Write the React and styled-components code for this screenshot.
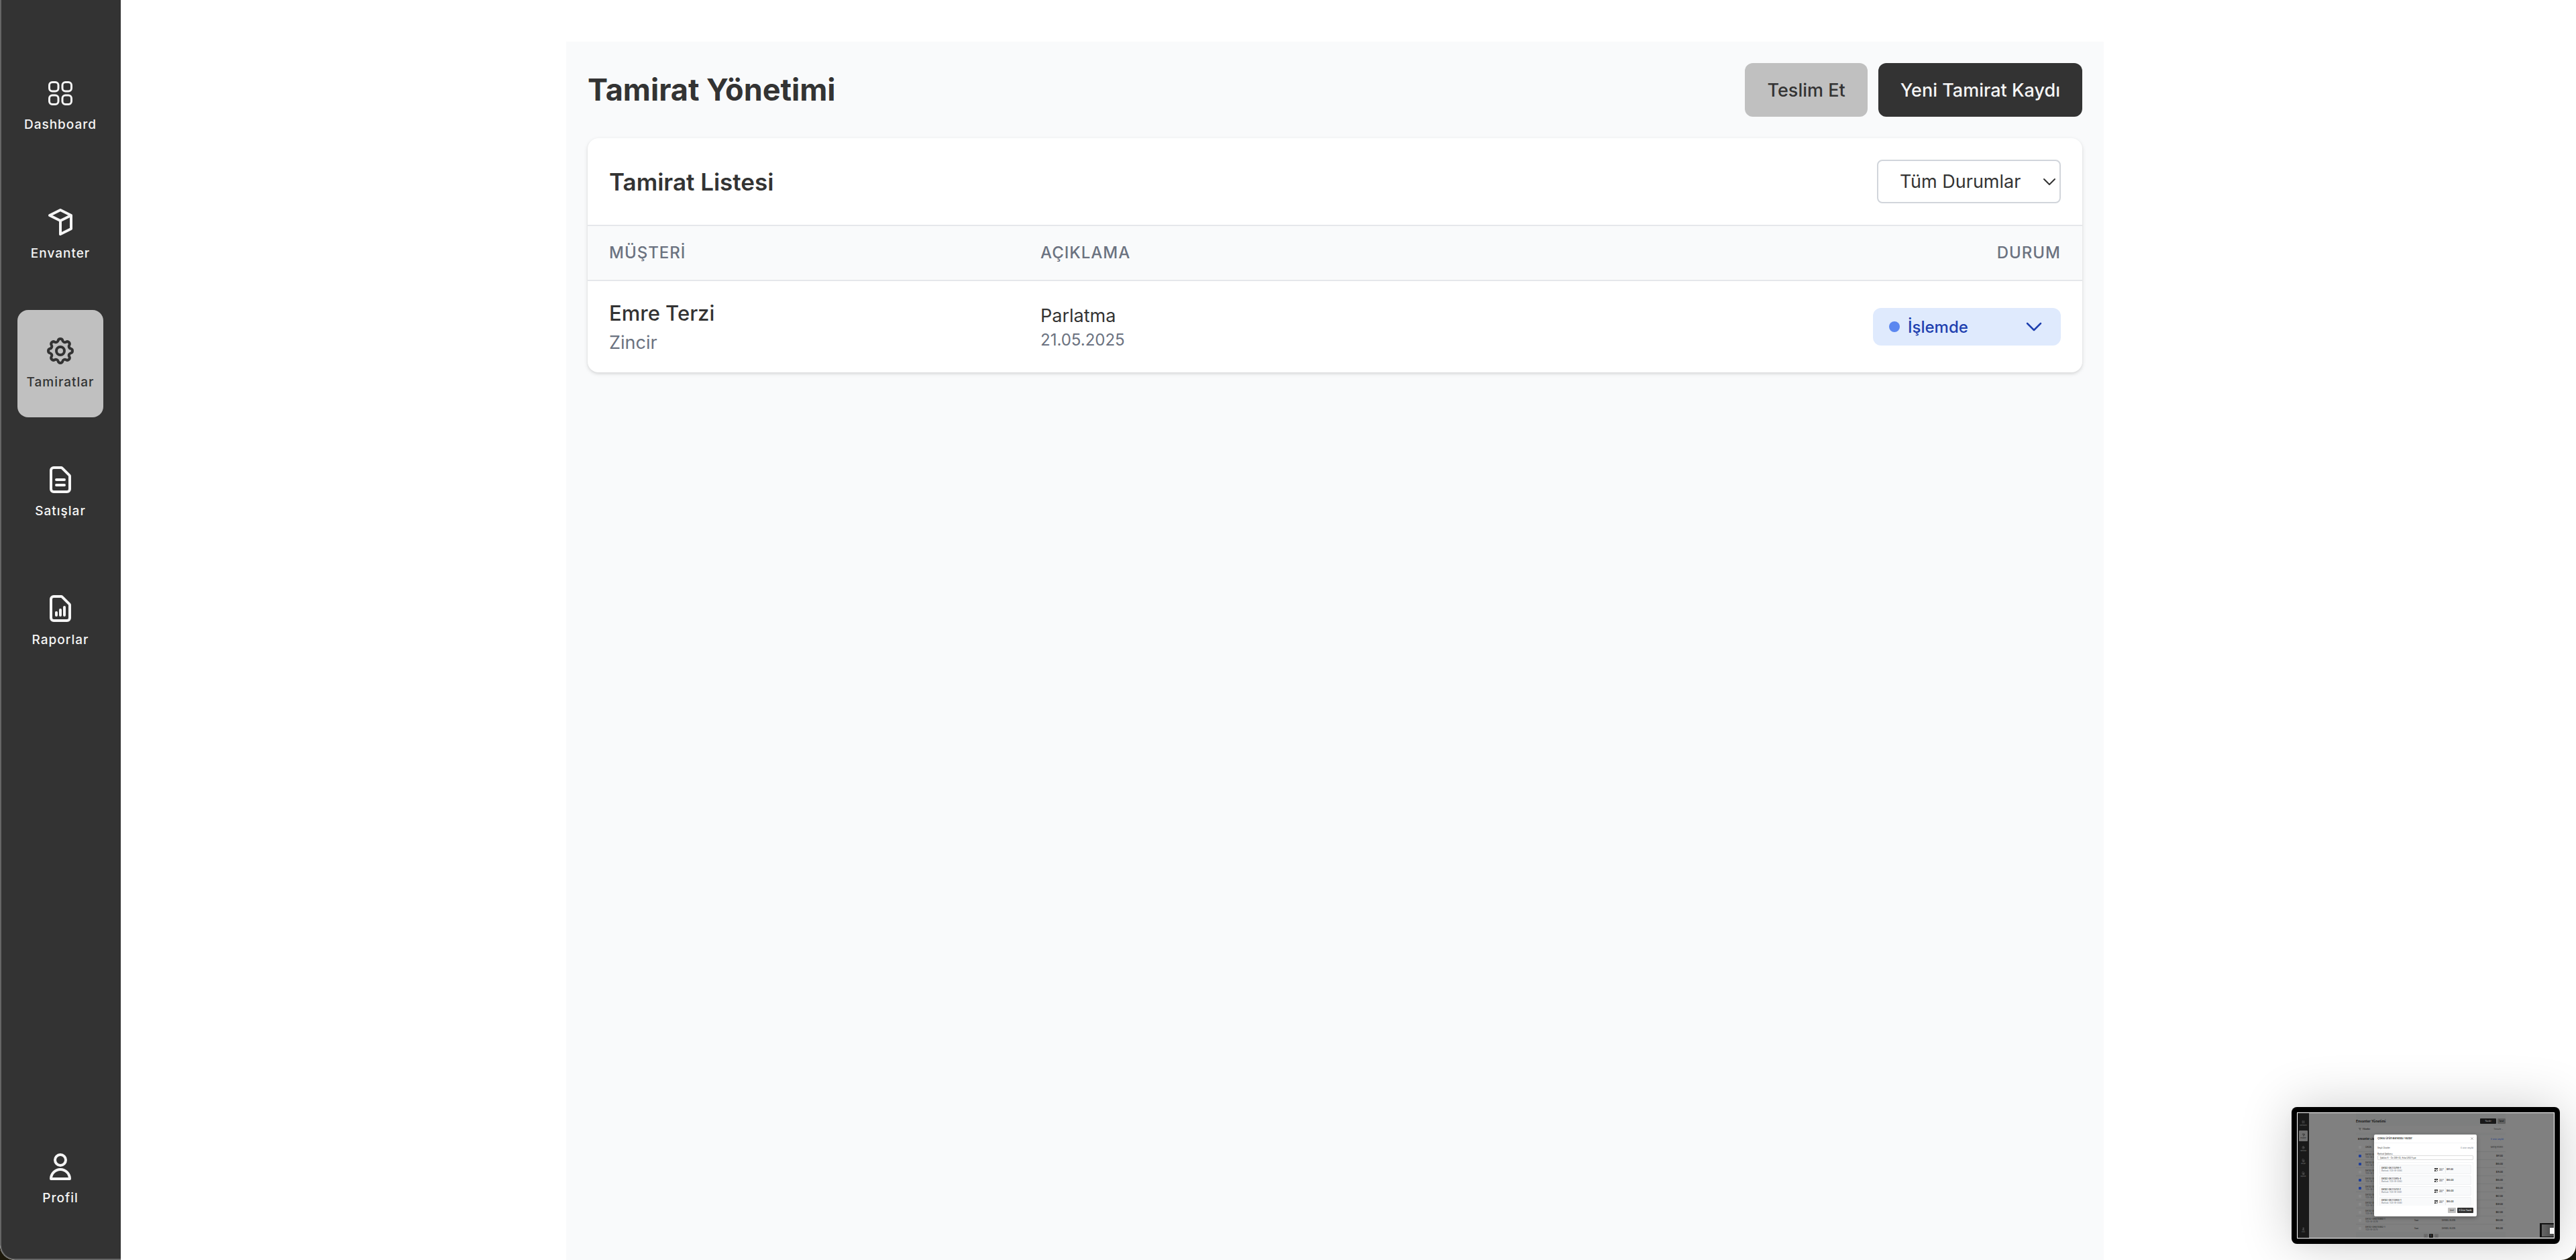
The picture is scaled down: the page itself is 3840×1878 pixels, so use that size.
import React from "react";
import styled, { createGlobalStyle } from "styled-components";

const Global = createGlobalStyle`
  *, *::before, *::after { box-sizing: border-box; }
  body { margin: 0; background: #1d190b; color: #333333; font-family: Inter, "Noto Sans", sans-serif; }
  h1, h2, p { margin: 0; }
  button, select, input { font: inherit; color: inherit; margin: 0; }
`;

const Shell = styled.div`
  display: flex;
  min-height: 100vh;
  background: #ffffff;
  border-radius: 0 0 22px 22px;
  overflow: hidden;
`;

const Sidebar = styled.nav`
  display: flex;
  flex-direction: column;
  align-items: center;
  gap: 32px;
  flex: none;
  width: 180px;
  padding: 78px 2px 38px 0;
  background: #333333;
  border-left: 2px solid #666666;
  border-bottom: 2px solid #666666;
  border-bottom-left-radius: 22px;
`;

const NavLink = styled.a`
  display: flex;
  flex-direction: column;
  align-items: center;
  justify-content: center;
  gap: 8px;
  width: 128px;
  height: 160px;
  margin-top: ${(p) => (p.$last ? "auto" : "0")};
  border-radius: 16px;
  background: ${(p) => (p.$active ? "#c0c0c0" : "transparent")};
  color: ${(p) => (p.$active ? "#333333" : "#f5f5f5")};
  font-size: 19px;
  font-weight: 500;
  line-height: 30px;
  letter-spacing: 1px;
  text-decoration: none;
  svg { width: 48px; height: 48px; }
`;

const Main = styled.main`
  display: flex;
  justify-content: center;
  flex: 1;
  min-width: 0;
  padding: 62px 40px 0 0;
`;

const Panel = styled.section`
  width: 100%;
  max-width: 2292px;
  padding: 32px;
  background: #f9fafb;
`;

const PageHeader = styled.header`
  display: flex;
  align-items: center;
  justify-content: space-between;
  margin-bottom: 32px;
`;

const Title = styled.h1`
  font-size: 45px;
  font-weight: 700;
  line-height: 64px;
`;

const Actions = styled.div`
  display: flex;
  gap: 16px;
`;

const Button = styled.button`
  height: 80px;
  padding: 0 33px;
  border: 0;
  border-radius: 12px;
  background: ${(p) => (p.$primary ? "#333333" : "#c0c0c0")};
  color: ${(p) => (p.$primary ? "#f5f5f5" : "#333333")};
  font-size: 27px;
  font-weight: 500;
`;

const Card = styled.section`
  border-radius: 16px;
  background: #ffffff;
  box-shadow: 0 2px 6px rgba(0, 0, 0, 0.1), 0 2px 4px rgba(0, 0, 0, 0.06);
  overflow: hidden;
`;

const CardHeader = styled.div`
  display: flex;
  align-items: center;
  justify-content: space-between;
  padding: 32px;
  border-bottom: 2px solid #e5e7eb;
`;

const CardTitle = styled.h2`
  font-size: 35px;
  font-weight: 600;
  line-height: 56px;
`;

const SelectWrap = styled.label`
  display: grid;
  align-items: center;
  width: 274px;
  > * { grid-area: 1 / 1; }
  svg { justify-self: end; width: 18px; height: 12px; margin-right: 8px; pointer-events: none; }
`;

const Select = styled.select`
  appearance: none;
  width: 100%;
  height: 65px;
  padding: 0 32px;
  border: 2px solid #d1d5db;
  border-radius: 8px;
  background: #ffffff;
  font-size: 27px;
`;

const Table = styled.table`
  width: 100%;
  border-collapse: separate;
  border-spacing: 0;
  table-layout: fixed;
`;

const Th = styled.th`
  width: ${(p) => p.$width || "auto"};
  height: 82px;
  padding: 0 32px;
  border-bottom: 2px solid #e5e7eb;
  background: #f9fafb;
  color: #6b7280;
  font-size: 24px;
  font-weight: 500;
  line-height: 32px;
  letter-spacing: 1px;
  text-align: ${(p) => p.$align || "left"};
`;

const Td = styled.td`
  padding: 24px 32px;
  text-align: ${(p) => p.$align || "left"};
  vertical-align: middle;
`;

const Customer = styled.p`
  font-size: 31px;
  font-weight: 500;
  line-height: 48px;
`;

const Product = styled.p`
  color: #6b7280;
  font-size: 27px;
  line-height: 40px;
`;

const Note = styled.p`
  font-size: 27px;
  line-height: 40px;
`;

const DateText = styled.p`
  color: #6b7280;
  font-size: 24px;
  line-height: 32px;
`;

const StatusButton = styled.button`
  display: inline-flex;
  align-items: center;
  gap: 12px;
  width: 280px;
  height: 56px;
  padding: 0 24px;
  border: 0;
  border-radius: 12px;
  background: #dfeafd;
  color: #1e40af;
  font-size: 24px;
  font-weight: 500;
  vertical-align: middle;
  svg { width: 32px; height: 32px; margin-left: auto; }
`;

const Dot = styled.span`
  width: 16px;
  height: 16px;
  border-radius: 50%;
  background: #5b87f0;
`;

/* Floating preview of another window */

const Preview = styled.aside`
  position: fixed;
  right: 24px;
  bottom: 24px;
  width: 400px;
  height: 204px;
  padding: 8px;
  border-radius: 8px;
  background: #000000;
  box-shadow: 0 0 80px rgba(0, 0, 0, 0.2), 0 4px 24px rgba(0, 0, 0, 0.04);
`;

const Screen = styled.div`
  position: relative;
  display: flex;
  height: 100%;
  border: 1px solid #ffffff;
  background: #808080;
  color: #1a1a1a;
  font-size: 3px;
  line-height: 4px;
  overflow: hidden;
`;

const MiniSidebar = styled.div`
  display: flex;
  flex-direction: column;
  align-items: center;
  gap: 3px;
  width: 17px;
  padding: 7px 0 4px;
  background: #191919;
`;

const MiniNav = styled.span`
  display: flex;
  flex-direction: column;
  align-items: center;
  justify-content: center;
  width: 13px;
  height: 16px;
  margin-top: ${(p) => (p.$last ? "auto" : "0")};
  border-radius: 1px;
  background: ${(p) => (p.$active ? "#707070" : "transparent")};
  color: ${(p) => (p.$active ? "#191919" : "#7a7a7a")};
  font-size: 2px;
  line-height: 4px;
  svg { width: 5px; height: 5px; }
`;

const MiniPage = styled.div`
  flex: none;
  width: 223px;
  margin-left: 70px;
  padding-top: 8px;
  background: #7d7e7e;
`;

const MiniBar = styled.div`
  display: flex;
  align-items: center;
  justify-content: space-between;
  height: ${(p) => p.$h}px;
  padding: 0 ${(p) => p.$pad || 0}px;
  margin-bottom: ${(p) => p.$mb || 0}px;
  background: ${(p) => p.$bg || "transparent"};
  font-size: ${(p) => p.$size || 4}px;
  font-weight: ${(p) => (p.$bold ? 700 : 400)};
`;

const MiniActions = styled.div`
  display: flex;
  gap: 2px;
`;

const MiniButton = styled.button`
  width: ${(p) => p.$w}px;
  height: 8px;
  padding: 0;
  border: 0;
  border-radius: 1px;
  background: ${(p) => p.$bg};
  color: ${(p) => p.$fg};
  font-size: 3px;
  line-height: 8px;
`;

const MiniLink = styled.span`
  color: ${(p) => p.$color || "#1b3a8a"};
  font-size: 3px;
  font-weight: 400;
`;

const MiniRow = styled.div`
  display: grid;
  grid-template-columns: 10px 73px 41px 1fr auto;
  align-items: center;
  height: 12px;
  padding: 0 4px;
  border-top: ${(p) => (p.$first ? "0" : "1px solid #777878")};
  background: #808080;
`;

const MiniBox = styled.span`
  width: 4px;
  height: 4px;
  border-radius: 1px;
  background: ${(p) => (p.$on ? "#1f3f9c" : "#8a8a8a")};
`;

const MiniText = styled.span`
  display: block;
  font-size: ${(p) => p.$size || 3}px;
  line-height: ${(p) => p.$lh || 4}px;
  font-weight: ${(p) => (p.$bold ? 600 : 400)};
  color: ${(p) => p.$color || "inherit"};
  white-space: nowrap;
`;

const Pager = styled.div`
  display: flex;
  justify-content: center;
  gap: 2px;
  padding-top: 3px;
`;

const PageNo = styled.span`
  width: 6px;
  height: 6px;
  border-radius: 1px;
  background: ${(p) => (p.$active ? "#191919" : "#6c6c6c")};
  color: ${(p) => (p.$active ? "#aaaaaa" : "#191919")};
  text-align: center;
  line-height: 6px;
`;

const Dialog = styled.div`
  position: absolute;
  left: 114px;
  top: 32px;
  display: flex;
  flex-direction: column;
  width: 153px;
  height: 122px;
  border-radius: 2px;
  background: #ffffff;
  color: #333333;
  box-shadow: 0 2px 6px rgba(0, 0, 0, 0.3);
`;

const DialogHead = styled.div`
  display: flex;
  align-items: center;
  justify-content: space-between;
  height: 13px;
  padding: 0 5px;
  border-bottom: 1px solid #f3f4f6;
  svg { width: 4px; height: 4px; }
`;

const DialogBody = styled.div`
  flex: 1;
  min-height: 0;
  padding: 4px 5px 0;
`;

const MiniField = styled.div`
  display: flex;
  align-items: center;
  height: 7px;
  margin-bottom: 3px;
  padding: 0 3px;
  border: 1px solid #dddddd;
  border-radius: 1px;
`;

const MiniList = styled.div`
  display: flex;
  flex-direction: column;
  gap: 2px;
  height: 65px;
  padding: 3px 2px 0;
  border: 1px solid #f3f4f6;
  border-bottom: 0;
  overflow: hidden;
`;

const MiniItem = styled.div`
  display: grid;
  grid-template-columns: 78px 6px 8px 1px 1fr;
  align-items: center;
  column-gap: 1px;
  flex: none;
  height: 14px;
  padding: 0 2px;
  border: 1px solid #f0f1f3;
  border-radius: 1px;
  background: #f9fafb;
  svg { width: 5px; height: 5px; }
`;

const Rule = styled.span`
  height: 9px;
  background: #e8eaee;
`;

const DialogFoot = styled.div`
  display: flex;
  justify-content: flex-end;
  gap: 2px;
  padding: 0 5px 5px;
`;

const Nested = styled.div`
  position: absolute;
  right: 0;
  bottom: 1px;
  display: flex;
  align-items: center;
  justify-content: flex-end;
  width: 21px;
  height: 21px;
  border: solid #111111;
  border-width: 2px 0 1px 3px;
  border-radius: 1px 0 0 1px;
  background: linear-gradient(90deg, #666666, #484848);
`;

const NestedCard = styled.span`
  width: 6px;
  height: 9px;
  background: #f5f5f5;
`;

const line = { fill: "none", stroke: "currentColor", strokeWidth: 2, strokeLinecap: "round", strokeLinejoin: "round" };

const GridIcon = () => (
  <svg viewBox="0 0 24 24" {...line} strokeWidth="1.5" aria-hidden="true">
    <rect x="3.75" y="3.75" width="6.75" height="6.75" rx="2.25" />
    <rect x="13.5" y="3.75" width="6.75" height="6.75" rx="2.25" />
    <rect x="3.75" y="13.5" width="6.75" height="6.75" rx="2.25" />
    <rect x="13.5" y="13.5" width="6.75" height="6.75" rx="2.25" />
  </svg>
);

const BoxIcon = () => (
  <svg viewBox="0 0 24 24" {...line} aria-hidden="true">
    <path d="M20 7l-8-4-8 4 8 4 8-4zM20 7v10l-8 4V11" />
  </svg>
);

const GearIcon = () => (
  <svg viewBox="0 0 24 24" {...line} aria-hidden="true">
    <path d="M10.325 4.317c.426-1.756 2.924-1.756 3.35 0a1.724 1.724 0 002.573 1.066c1.543-.94 3.31.826 2.37 2.37a1.724 1.724 0 001.065 2.572c1.756.426 1.756 2.924 0 3.35a1.724 1.724 0 00-1.066 2.573c.94 1.543-.826 3.31-2.37 2.37a1.724 1.724 0 00-2.572 1.065c-.426 1.756-2.924 1.756-3.35 0a1.724 1.724 0 00-2.573-1.066c-1.543.94-3.31-.826-2.37-2.37a1.724 1.724 0 00-1.065-2.572c-1.756-.426-1.756-2.924 0-3.35a1.724 1.724 0 001.066-2.573c-.94-1.543.826-3.31 2.37-2.37.996.608 2.296.07 2.572-1.065z" />
    <circle cx="12" cy="12" r="3" />
  </svg>
);

const DocIcon = () => (
  <svg viewBox="0 0 24 24" {...line} aria-hidden="true">
    <path d="M9 12h6m-6 4h6m2 5H7a2 2 0 01-2-2V5a2 2 0 012-2h5.586a1 1 0 01.707.293l5.414 5.414a1 1 0 01.293.707V19a2 2 0 01-2 2z" />
  </svg>
);

const ReportIcon = () => (
  <svg viewBox="0 0 24 24" {...line} aria-hidden="true">
    <path d="M9 17v-2m3 2v-4m3 4v-6m2 10H7a2 2 0 01-2-2V5a2 2 0 012-2h5.586a1 1 0 01.707.293l5.414 5.414a1 1 0 01.293.707V19a2 2 0 01-2 2z" />
  </svg>
);

const UserIcon = () => (
  <svg viewBox="0 0 24 24" {...line} aria-hidden="true">
    <path d="M16 7a4 4 0 11-8 0 4 4 0 018 0zM12 14a7 7 0 00-7 7h14a7 7 0 00-7-7z" />
  </svg>
);

const FilterIcon = () => (
  <svg width="4" height="4" viewBox="0 0 24 24" {...line} aria-hidden="true">
    <path d="M3 3h18l-7 9v8l-4-3v-5z" />
  </svg>
);

const CodeIcon = () => (
  <svg viewBox="0 0 5 5" fill="#333333" aria-hidden="true">
    <path d="M0 0h2v2H0zM3 0h2v2H3zM0 3h2v2H0zM2 2h1v1H2zM4 3h1v1H4zM3 4h1v1H3zM2 0h1v1H2z" />
  </svg>
);

const navItems = [
  { label: "Dashboard", Icon: GridIcon },
  { label: "Envanter", Icon: BoxIcon },
  { label: "Tamiratlar", Icon: GearIcon, active: true },
  { label: "Satışlar", Icon: DocIcon },
  { label: "Raporlar", Icon: ReportIcon },
  { label: "Profil", Icon: UserIcon, last: true },
];

const stock = [
  { on: true, price: "$91.00" },
  { on: true, price: "$65.00" },
  { on: false, price: "$76.00" },
  { on: true, price: "$65.00" },
  { on: true, price: "$65.00" },
  { on: false, price: "$62.00" },
  { on: false, price: "$59.00" },
  { on: false, price: "$62.00" },
  { on: false, price: "$63.00", name: "DK102-DK8.110850-1" },
  { on: false, price: "$65.00", name: "DK102-DK8.110852-1" },
];

const picked = [
  { name: "DK102-DK.1.13788-1", code: "TGS-W-0084", price: "$91.00" },
  { name: "DK102-DK.1.13915-4", code: "TGS-W-0083", price: "$65.00" },
  { name: "DK102-DK.1.13731-2", code: "TGS-W-0081", price: "$65.00" },
  { name: "DK102-DK.1.13944-1", code: "TGS-W-0080", price: "$65.00" },
];

function WindowPreview() {
  return (
    <Preview aria-label="Envanter Yönetimi">
      <Screen>
        <MiniSidebar>
          {navItems.map(({ label, Icon, last }) => (
            <MiniNav key={label} $active={label === "Envanter"} $last={last}>
              <Icon />
              {label}
            </MiniNav>
          ))}
        </MiniSidebar>
        <MiniPage>
          <MiniBar $h={8} $mb={3} $size={5} $bold>
            Envanter Yönetimi
            <MiniActions>
              <MiniButton $w={24} $bg="#191919" $fg="#8a8a8a">Yazdır</MiniButton>
              <MiniButton $w={12} $bg="#606060" $fg="#191919">İptal</MiniButton>
            </MiniActions>
          </MiniBar>
          <MiniBar $h={10} $mb={4} $pad={4} $bg="#808080">
            <MiniActions><FilterIcon /> <MiniText $bold>Filtreler</MiniText></MiniActions>
            <MiniLink $color="#333333">Temizle ⌵</MiniLink>
          </MiniBar>
          <MiniBar $h={12} $pad={3} $bg="#808080" $bold>
            Envanter Listesi
            <MiniLink>4 ürün seçildi</MiniLink>
          </MiniBar>
          <MiniRow $first>
            <MiniBox />
            <MiniText>ÜRÜN</MiniText>
            <span />
            <span />
            <MiniText>SATIŞ FİYATI</MiniText>
          </MiniRow>
          {stock.map((row, i) => (
            <MiniRow key={i}>
              <MiniBox $on={row.on} />
              <div>
                <MiniText>{row.name || "DK102-DK.1"}</MiniText>
                <MiniText $color="#3a3d43">TGS-W-00{84 - i}</MiniText>
              </div>
              <MiniText>Saat</MiniText>
              <MiniText>DANIEL KLEIN</MiniText>
              <MiniText $bold>{row.price}</MiniText>
            </MiniRow>
          ))}
          <Pager>
            <PageNo>‹</PageNo>
            <PageNo $active>1</PageNo>
            <PageNo>›</PageNo>
          </Pager>
        </MiniPage>
        <Nested><NestedCard /></Nested>
        <Dialog>
          <DialogHead>
            <MiniText $size={4} $bold>Çoklu Ürün Barkodu Yazdır</MiniText>
            <svg viewBox="0 0 24 24" {...line} aria-hidden="true"><path d="M3 3l18 18M21 3L3 21" /></svg>
          </DialogHead>
          <DialogBody>
            <MiniBar $h={5} $mb={5} $size={3}>
              Seçili Ürünler
              <MiniLink $color="#6b7280">4 ürün seçildi</MiniLink>
            </MiniBar>
            <MiniText>Barkod Şablonu</MiniText>
            <MiniField><MiniText>Şablon A - Ön DW+ID, Arka USD Fiyat</MiniText></MiniField>
            <MiniList>
              {picked.map((item) => (
                <MiniItem key={item.code}>
                  <div>
                    <MiniText $bold>{item.name}</MiniText>
                    <MiniText $color="#6b7280">Barkod: {item.code}</MiniText>
                  </div>
                  <CodeIcon />
                  <MiniText $size={2} $lh={2}>TGS-W<br />0084</MiniText>
                  <Rule />
                  <MiniText $bold>{item.price}</MiniText>
                </MiniItem>
              ))}
            </MiniList>
          </DialogBody>
          <DialogFoot>
            <MiniButton $w={12} $bg="#c0c0c0" $fg="#333333">İptal</MiniButton>
            <MiniButton $w={24} $bg="#333333" $fg="#ffffff">4 Ürün Yazdır</MiniButton>
          </DialogFoot>
        </Dialog>
      </Screen>
    </Preview>
  );
}

export default function App() {
  return (
    <>
      <Global />
      <Shell>
        <Sidebar>
          {navItems.map(({ label, Icon, active, last }) => (
            <NavLink key={label} href="#" $active={active} $last={last}>
              <Icon />
              {label}
            </NavLink>
          ))}
        </Sidebar>
        <Main>
          <Panel>
            <PageHeader>
              <Title>Tamirat Yönetimi</Title>
              <Actions>
                <Button type="button">Teslim Et</Button>
                <Button type="button" $primary>Yeni Tamirat Kaydı</Button>
              </Actions>
            </PageHeader>
            <Card>
              <CardHeader>
                <CardTitle>Tamirat Listesi</CardTitle>
                <SelectWrap>
                  <Select aria-label="Durum filtresi" defaultValue="all">
                    <option value="all">Tüm Durumlar</option>
                  </Select>
                  <svg viewBox="0 0 18 12" {...line} aria-hidden="true">
                    <path d="M1 2l8 8 8-8" />
                  </svg>
                </SelectWrap>
              </CardHeader>
              <Table>
                <thead>
                  <tr>
                    <Th $width="643px">MÜŞTERİ</Th>
                    <Th>AÇIKLAMA</Th>
                    <Th $width="344px" $align="right">DURUM</Th>
                  </tr>
                </thead>
                <tbody>
                  <tr>
                    <Td>
                      <Customer>Emre Terzi</Customer>
                      <Product>Zincir</Product>
                    </Td>
                    <Td>
                      <Note>Parlatma</Note>
                      <DateText>21.05.2025</DateText>
                    </Td>
                    <Td $align="right">
                      <StatusButton type="button">
                        <Dot />
                        İşlemde
                        <svg viewBox="0 0 32 32" {...line} strokeWidth="2.5" aria-hidden="true">
                          <path d="M6 11l10 10 10-10" />
                        </svg>
                      </StatusButton>
                    </Td>
                  </tr>
                </tbody>
              </Table>
            </Card>
          </Panel>
        </Main>
      </Shell>
      <WindowPreview />
    </>
  );
}
